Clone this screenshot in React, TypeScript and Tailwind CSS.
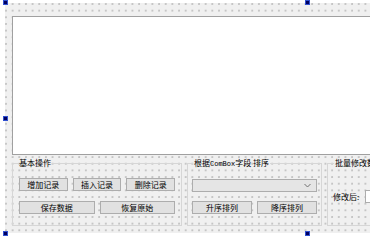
const btn =
  "h-[13px] bg-[#e1e1e1] border border-[#adadad] text-[8px] leading-none flex items-center justify-center text-black";

const dots =
  "bg-[#f0f0f0] bg-[radial-gradient(circle_at_1px_1px,#c4c4c4_0.7px,transparent_1px)] bg-[length:6.67px_6.67px]";

const Handle = ({ x, y }: { x: number; y: number }) => (
  <div
    className="absolute w-[5px] h-[5px] bg-[#000060] border border-[#3050d0]"
    style={{ left: x, top: y }}
  />
);

export default function App() {
  return (
    <div className="relative w-[370px] h-[240px] bg-white overflow-hidden font-[family-name:'Noto_Sans_CJK_SC',sans-serif]">
      <div className={`ml-[5px] mt-[3px] w-[604px] h-[230px] ${dots} flex flex-col pt-[13px] px-[7px]`}>
        <div className="h-[139px] flex-none bg-white border border-[#a0a0a0]" />

        <div className="flex gap-[5px] mt-[3px] h-[68px]">
          <fieldset className="w-[170px] flex-none border border-[#d6d6d6] px-[6px] pt-[10px]">
            <legend className="text-[8px] leading-[10px] px-[1px] -ml-[1px]">基本操作</legend>
            <div className="grid grid-cols-3 gap-[5px]">
              <div className={btn}>增加记录</div>
              <div className={btn}>插入记录</div>
              <div className={btn}>删除记录</div>
            </div>
            <div className="grid grid-cols-2 gap-[5px] mt-[10px]">
              <div className={btn}>保存数据</div>
              <div className={btn}>恢复原始</div>
            </div>
          </fieldset>

          <fieldset className="w-[135px] flex-none border border-[#d6d6d6] px-[4px] pt-[10px]">
            <legend className="text-[8px] leading-[10px] px-[1px] ml-[1px]">
              根据<span className="font-[family-name:'Liberation_Mono',monospace] text-[7px]">ComBox</span>字段 排序
            </legend>
            <div className="h-[13px] bg-[#e5e5e5] border border-[#adadad] flex items-center justify-end pr-[5px]">
              <svg width="7" height="5" viewBox="0 0 7 5">
                <path d="M0.5 1 L3.5 4 L6.5 1" fill="none" stroke="#707070" strokeWidth="1" />
              </svg>
            </div>
            <div className="grid grid-cols-2 gap-[5px] mt-[9px]">
              <div className={btn}>升序排列</div>
              <div className={btn}>降序排列</div>
            </div>
          </fieldset>

          <fieldset className="flex-1 border border-[#d6d6d6] px-[5px] pt-[22px]">
            <legend className="text-[8px] leading-[10px] px-[1px] ml-[1px]">批量修改数据</legend>
            <div className="flex items-center gap-[6px]">
              <span className="text-[8px] leading-none">修改后:</span>
              <div className="w-[80px] h-[13px] bg-white border border-[#adadad]" />
            </div>
          </fieldset>
        </div>
      </div>

      <Handle x={3} y={0} />
      <Handle x={3} y={116} />
      <Handle x={3} y={231} />
      <Handle x={305} y={0} />
      <Handle x={305} y={231} />
    </div>
  );
}
